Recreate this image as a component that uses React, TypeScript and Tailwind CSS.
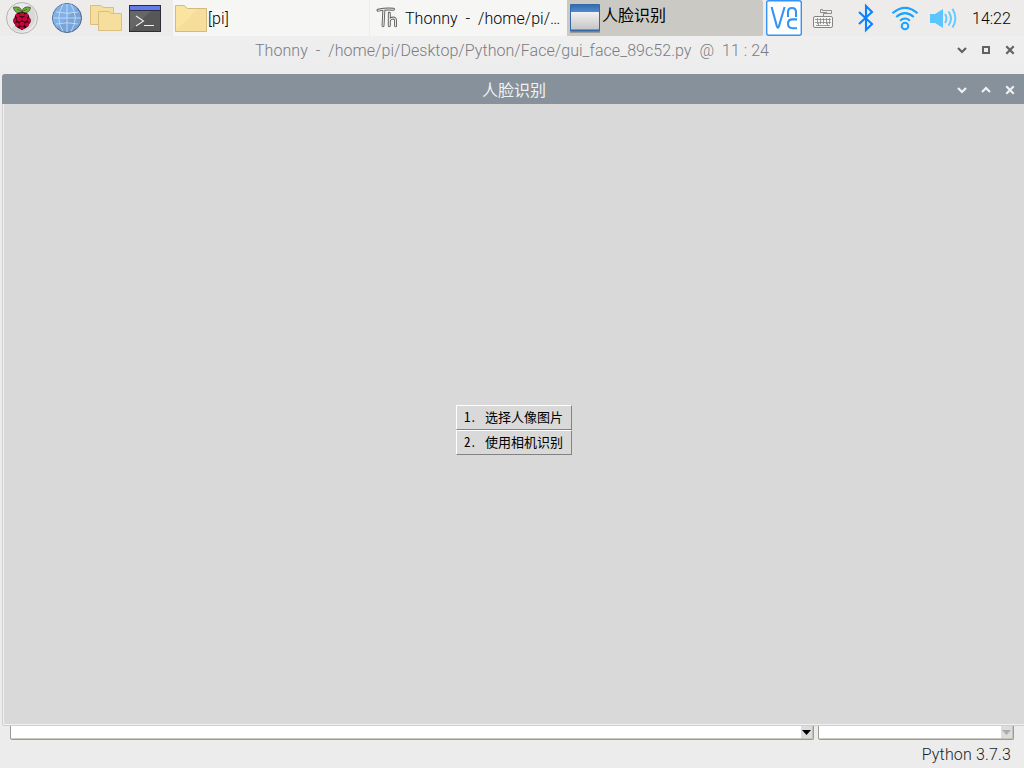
import { ReactNode } from "react";

interface TaskButtonProps {
  icon: ReactNode;
  children: ReactNode;
  className?: string;
}

const drupelets = [
  [22, 14.6, 2.6, 2],
  [17.6, 15.5, 2.2, 2],
  [26.4, 15.5, 2.2, 2],
  [19.3, 19.1, 2.7, 2.4],
  [24.7, 19.1, 2.7, 2.4],
  [14.9, 20.3, 1.4, 2.5],
  [29.1, 20.3, 1.4, 2.5],
  [22, 23.8, 2.7, 2.4],
  [17, 24.6, 2.1, 2.4],
  [27, 24.6, 2.1, 2.4],
  [22, 27.9, 2.5, 1.3],
];

function RaspberryIcon() {
  return (
    <svg width="34" height="36" viewBox="5 0 34 36">
      <circle cx="22" cy="18" r="15.5" fill="#e9e9e9" stroke="#b4b4b4" />
      <path d="M32.5 7.5A15 15 0 0 1 11.5 28.5Z" fill="#d8d8d8" />
      <path d="M22 12C25.5 11.5 29.5 14 29.3 17.5C32 20 30.5 23.5 28.6 24.5C27.5 28 24.5 28.6 22 30C19.5 28.6 16.5 28 15.4 24.5C13.5 23.5 12 20 14.7 17.5C14.5 14 18.5 11.5 22 12Z" fill="#180409" />
      {drupelets.map(([cx, cy, rx, ry]) => (
        <ellipse key={`${cx}-${cy}`} cx={cx} cy={cy} rx={rx} ry={ry} fill="#c7053d" />
      ))}
      <path d="M22 12C18 14 14.2 12 13.4 7.4C17 6.3 21.5 7 22 12ZM22 12C26 14 29.8 12 30.6 7.4C27 6.3 22.5 7 22 12Z" fill="#70b43c" stroke="#15210d" strokeWidth=".6" />
      <path d="M21.4 11.5L17 9M22.6 11.5L27 9" stroke="#28451a" strokeWidth=".6" />
    </svg>
  );
}

function GlobeIcon() {
  return (
    <svg width="32" height="36" viewBox="51 0 32 36" fill="none">
      <circle cx="67" cy="18" r="14.5" fill="#77a4d9" stroke="#4c6582" />
      <path d="M53 18A14 14 0 0 1 77 8L57 28A14 14 0 0 1 53 18Z" fill="#80b0e8" />
      <path d="M53 18H81M67 4V32M56 12Q67 14.5 78 12M56 24Q67 21.5 78 24M63 4.5Q54.5 18 63 31.5M71 4.5Q79.5 18 71 31.5" stroke="#c7dcf2" strokeWidth=".9" />
    </svg>
  );
}

function FoldersIcon() {
  return (
    <svg width="34" height="36" viewBox="89 0 34 36" fill="#f6df9c" stroke="#d9bd83">
      <path d="M90.5 24.5V5.5H100.5L103.5 7.5H113.5V24.5Z" />
      <path d="M98.5 30.5V11.5H108.5L111.5 13.5H121.5V30.5Z" />
    </svg>
  );
}

function TerminalIcon() {
  return (
    <svg width="34" height="36" viewBox="128 0 34 36">
      <rect x="129.5" y="5.5" width="31" height="26" fill="#575757" stroke="#2c2d35" />
      <path d="M130 10H152L130 31Z" fill="#666" />
      <path d="M130 6H160V10H130Z" fill="#617bea" />
      <path d="M129 10.5H161" stroke="#292c43" />
      <path d="M136 16L143.5 21L136 26M144 25.5H154" stroke="#f1f1f1" strokeWidth="1.1" fill="none" />
    </svg>
  );
}

function FolderIcon() {
  return (
    <svg width="33" height="36" viewBox="174 0 33 36">
      <path d="M175.5 31.5V5.5H184L187.5 8.5H206.5V31.5Z" fill="#f5de9c" stroke="#d5b97f" />
      <path d="M176 30V6H183.5L187 9H198Z" fill="#f9e4a0" />
    </svg>
  );
}

function ThonnyIcon() {
  const strokes = "M378 10.2Q386 8.5 393.5 9.2M383.9 10L383 25.7M389.3 13.2V25.7M389.5 20Q392.5 16.8 395.2 18.8Q395.8 22 395.6 25.9";

  return (
    <svg width="24" height="36" viewBox="376 0 24 36" fill="none" strokeLinejoin="round" strokeLinecap="round">
      <path d={strokes} stroke="#5c5c5c" strokeWidth="2.9" />
      <path d={strokes} stroke="#ededed" strokeWidth="1.1" />
    </svg>
  );
}

function WindowIcon() {
  return (
    <svg width="32" height="36" viewBox="569 0 32 36">
      <defs>
        <linearGradient id="titleFill" x2="0" y2="1"><stop stopColor="#356dae" /><stop offset="1" stopColor="#5089d0" /></linearGradient>
        <linearGradient id="paneFill" x2="0" y2="1"><stop stopColor="#f1f1f1" /><stop offset="1" stopColor="#c5c5c5" /></linearGradient>
      </defs>
      <rect x="570" y="31" width="30" height="2" fill="#9a9a98" />
      <rect x="570" y="4" width="30" height="27.5" rx="1" fill="#3468a6" />
      <rect x="571" y="5" width="28" height="7" fill="url(#titleFill)" />
      <rect x="571" y="12" width="28" height="17.5" fill="url(#paneFill)" />
    </svg>
  );
}

function VncIcon() {
  return (
    <svg width="36" height="36" viewBox="766 0 36 36" fill="none" stroke="#3393f6">
      <rect x="766.7" y=".7" width="34.6" height="34.6" rx="2" fill="white" strokeWidth="1.4" />
      <path d="M771.6 7L776.8 26Q777.9 29.6 779 26L784.6 7" strokeWidth="2.1" />
      <path d="M788 17V12Q788 8 792 8T796 12V17M797 19.4H792.5Q788 19.4 788 23.8T792.5 28.2H797" strokeWidth="2.1" />
    </svg>
  );
}

function KeyboardIcon() {
  return (
    <svg width="22" height="36" viewBox="812 0 22 36" fill="none" stroke="#858584">
      <path d="M823.5 16V13.5H831.5V10.5H822.5V9.5H820.5V12.5H827" strokeWidth=".9" />
      <rect x="813.5" y="16.5" width="19" height="11" rx="1.5" fill="#f6f6f5" />
      <path d="M815 19.5H831M815 22.5H831M816 25.5H830M817.5 18V24M820.5 18V24M823.5 18V24M826.5 18V24M829.5 18V24M818.5 23V26M827.5 23V26" strokeWidth=".8" />
    </svg>
  );
}

function BluetoothIcon() {
  return (
    <svg width="20" height="36" viewBox="856 0 20 36" fill="none">
      <path d="M859 12L872 24L866 30V6L872 12L859 24" stroke="#0b82ff" strokeWidth="2.1" />
    </svg>
  );
}

function WifiIcon() {
  return (
    <svg width="30" height="36" viewBox="890 0 30 36" fill="none" stroke="#1aa4ff" strokeWidth="2">
      <path d="M892.4 13.3Q905 2.4 917.6 13.3M896.2 17Q905 9.3 913.8 17M900 20.7Q905 16.4 910 20.7" />
      <circle cx="905" cy="26" r="3.3" />
    </svg>
  );
}

function VolumeIcon() {
  return (
    <svg width="30" height="36" viewBox="928 0 30 36" fill="none" stroke="#64caff" strokeWidth="2">
      <path d="M930 14H935L943 9V28L935 23H930Z" fill="#5bc5ff" stroke="none" />
      <path d="M945 14Q948 18.5 945 23M948.5 11.5Q953.5 18.5 948.5 25.5M952.5 8.8Q958.3 18.5 952.5 27.5" />
    </svg>
  );
}

function TaskButton({ icon, children, className = "" }: TaskButtonProps) {
  return (
    <div className={`flex h-9 items-center overflow-hidden whitespace-pre bg-[#f6f6f4] ${className}`}>
      {icon}
      {children}
    </div>
  );
}

function WindowControls({ maximized = false }: { maximized?: boolean }) {
  return (
    <svg width="64" height="20" viewBox="954 40 64 20" fill="none" stroke="currentColor" strokeWidth="2.2">
      <path d="M958 48L962 52L966 48" />
      {maximized ? <path d="M982 52L986 48L990 52" /> : <rect x="983" y="47" width="6" height="6" strokeWidth="2" />}
      <path d="M1006.3 46.3L1013.7 53.7M1013.7 46.3L1006.3 53.7" />
    </svg>
  );
}

function Taskbar() {
  return (
    <header className="flex h-9 bg-[#edeceb] text-[16px] text-black">
      <nav className="flex w-[173px] shrink-0 gap-x-[5px] pl-[5px]">
        <RaspberryIcon />
        <div className="pl-[7px]"><GlobeIcon /></div>
        <div className="pl-px"><FoldersIcon /></div>
        <TerminalIcon />
      </nav>
      <TaskButton icon={<FolderIcon />} className="w-[196px] shrink-0 pl-px">
        <span className="pt-[2px] pl-px tracking-[0.2px]">[pi]</span>
      </TaskButton>
      <TaskButton icon={<ThonnyIcon />} className="ml-px w-[197px] shrink-0 pl-[6px]">
        <span className="pt-[2px] pl-[5px] tracking-[0.03px]">Thonny  -  /home/pi/…</span>
      </TaskButton>
      <TaskButton icon={<WindowIcon />} className="w-[196px] shrink-0 rounded-r-xs bg-[#cac9c4]! pl-[2px]">
        <span className="pb-[9px] pl-px font-['Noto_Sans_CJK_SC',sans-serif] text-[16px] leading-6 font-normal">人脸识别</span>
      </TaskButton>
      <div className="flex pl-[3px]">
        <VncIcon />
        <div className="pl-[10px]"><KeyboardIcon /></div>
        <div className="pl-[22px]"><BluetoothIcon /></div>
        <div className="pl-[14px]"><WifiIcon /></div>
        <div className="pl-[8px]"><VolumeIcon /></div>
      </div>
      <span className="pt-px pl-[14px] leading-9">14:22</span>
    </header>
  );
}

function FaceWindow() {
  const actions = [
    { number: "1.", label: "选择人像图片" },
    { number: "2.", label: "使用相机识别" },
  ];

  return (
    <section className="ml-[2px] h-[652px] shrink-0 overflow-hidden rounded-tl-[3px] rounded-bl-[2px] border-b border-[#cfcfcf] bg-[#d9d9d9]">
      <div className="flex h-[30px] items-center bg-[#87919b] text-[#f1f1f1]">
        <h1 className="flex-1 pb-px pl-[72px] text-center font-['Noto_Sans_CJK_SC',sans-serif] text-[16px] leading-6 font-normal">人脸识别</h1>
        <div className="pt-[2px] pr-[6px]"><WindowControls maximized /></div>
      </div>
      <div className="h-[621px] border-l border-[#cfcfcf]">
        <main className="flex h-full flex-col items-center border-b border-l border-[#f1f1f1] pt-[301px]">
          {actions.map(({ number, label }) => (
            <button key={number} className="flex h-[25px] w-[116px] items-center border border-t-white border-r-[#828282] border-b-[#828282] border-l-white pb-[2px] pl-[7px] font-['Noto_Sans_CJK_SC',sans-serif] text-[13px] leading-none font-normal text-black">
              <span className="w-[21px] text-left font-['Noto_Sans_Mono_CJK_SC','Noto_Sans_CJK_SC',monospace] tracking-[-0.4px]">{number}</span>
              <span>{label}</span>
            </button>
          ))}
        </main>
      </div>
    </section>
  );
}

function Dropdown({ disabled = false, className }: { disabled?: boolean; className: string }) {
  return (
    <div className={`flex h-[14px] justify-end rounded-b-xs border-x border-b border-[#9e9c92] bg-white shadow-[inset_0_-1px_#ccc9c2] ${className}`}>
      <div className={`flex w-3 justify-center border-r border-b border-[#c5c2b9] bg-[#dcdcdc] pt-1 ${disabled ? "text-[#ababab]" : "text-black"}`}>
        <svg width="9" height="5" viewBox="0 0 9 5"><path d="M0 0H9L4.5 5Z" fill="currentColor" /></svg>
      </div>
    </div>
  );
}

export default function App() {
  return (
    <div className="flex h-[768px] w-[1024px] flex-col overflow-hidden bg-[#ececec] font-['Roboto',sans-serif] font-light">
      <Taskbar />
      <div className="flex h-[38px] shrink-0 bg-linear-to-b from-[#efefef] to-[#ececec] text-[#7b7b83]">
        <div className="h-[28px] flex-1 whitespace-pre pl-[70px] text-center text-[16px] leading-[30px] tracking-[0.05px]">Thonny  -  /home/pi/Desktop/Python/Face/gui_face_89c52.py  @  11 : 24</div>
        <div className="pt-[4px] pr-[6px] text-[#626262]"><WindowControls /></div>
      </div>
      <FaceWindow />
      <div className="flex gap-1 pr-[10px] pl-[10px]">
        <Dropdown className="w-[804px]" />
        <Dropdown disabled className="w-[196px]" />
      </div>
      <footer className="pr-[13px] text-right text-[16px] leading-[30px] tracking-[0.15px] text-[#1c1c1c]">Python 3.7.3</footer>
    </div>
  );
}
